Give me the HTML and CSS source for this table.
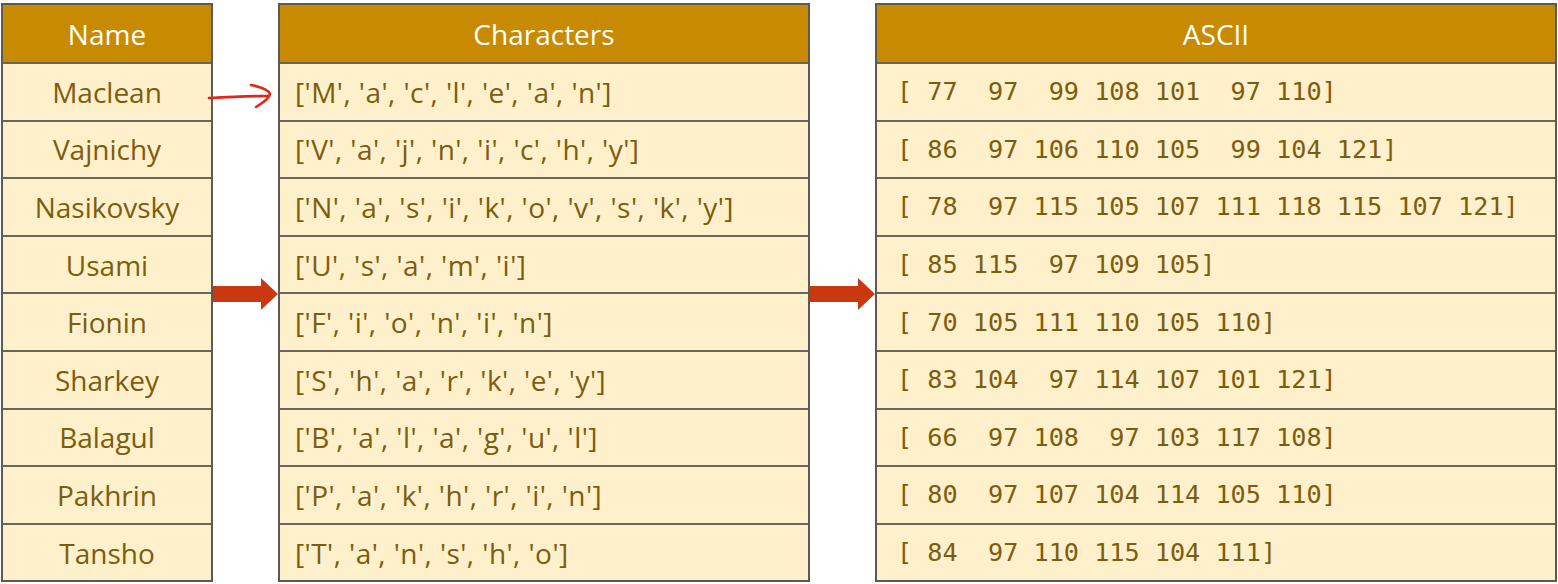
FILE: index.html
```html
<!DOCTYPE html>
<html lang="en">
<head>
    <meta charset="UTF-8">
    <title>Names to ASCII</title>
    <link rel="stylesheet" href="styles.css">
</head>
<body>
    <div class="board">
        <div class="table names">
            <div class="head">Name</div>
            <div class="cell">Maclean</div>
            <div class="cell">Vajnichy</div>
            <div class="cell">Nasikovsky</div>
            <div class="cell">Usami</div>
            <div class="cell">Fionin</div>
            <div class="cell">Sharkey</div>
            <div class="cell">Balagul</div>
            <div class="cell">Pakhrin</div>
            <div class="cell">Tansho</div>
        </div>

        <div class="gap">
            <svg class="scribble" width="70" height="30" viewBox="0 0 70 30">
                <path d="M2 17 C 20 16, 45 15, 62 15" fill="none" stroke="#e3241b" stroke-width="2.6" stroke-linecap="round"/>
                <path d="M44 4 C 54 6, 62 9, 63 13 C 62 18, 54 23, 49 26" fill="none" stroke="#e3241b" stroke-width="2.6" stroke-linecap="round"/>
            </svg>
            <svg class="arrow" width="66" height="34" viewBox="0 0 66 34">
                <polygon points="0,9 48,9 48,1 65,17 48,33 48,25 0,25" fill="#c9380f"/>
            </svg>
        </div>

        <div class="table chars">
            <div class="head">Characters</div>
            <div class="cell">['M', 'a', 'c', 'l', 'e', 'a', 'n']</div>
            <div class="cell">['V', 'a', 'j', 'n', 'i', 'c', 'h', 'y']</div>
            <div class="cell">['N', 'a', 's', 'i', 'k', 'o', 'v', 's', 'k', 'y']</div>
            <div class="cell">['U', 's', 'a', 'm', 'i']</div>
            <div class="cell">['F', 'i', 'o', 'n', 'i', 'n']</div>
            <div class="cell">['S', 'h', 'a', 'r', 'k', 'e', 'y']</div>
            <div class="cell">['B', 'a', 'l', 'a', 'g', 'u', 'l']</div>
            <div class="cell">['P', 'a', 'k', 'h', 'r', 'i', 'n']</div>
            <div class="cell">['T', 'a', 'n', 's', 'h', 'o']</div>
        </div>

        <div class="gap">
            <svg class="arrow" width="66" height="34" viewBox="0 0 66 34">
                <polygon points="0,9 48,9 48,1 65,17 48,33 48,25 0,25" fill="#c9380f"/>
            </svg>
        </div>

        <div class="table ascii">
            <div class="head">ASCII</div>
            <div class="cell">[ 77  97  99 108 101  97 110]</div>
            <div class="cell">[ 86  97 106 110 105  99 104 121]</div>
            <div class="cell">[ 78  97 115 105 107 111 118 115 107 121]</div>
            <div class="cell">[ 85 115  97 109 105]</div>
            <div class="cell">[ 70 105 111 110 105 110]</div>
            <div class="cell">[ 83 104  97 114 107 101 121]</div>
            <div class="cell">[ 66  97 108  97 103 117 108]</div>
            <div class="cell">[ 80  97 107 104 114 105 110]</div>
            <div class="cell">[ 84  97 110 115 104 111]</div>
        </div>
    </div>
</body>
</html>
```

FILE: styles.css
```css
body {
    margin: 0;
    background-color: white;
    font-family: "Open Sans", "Noto Sans", sans-serif;
}
.board {
    display: flex;
    padding: 3px 0 0 1px;
}
.table {
    border: 2px solid #5c5a55;
    background-color: #fef0cb;
    color: #7d5c0e;
    box-sizing: border-box;
}
.names {
    width: 212px;
}
.chars {
    width: 532px;
}
.ascii {
    width: 682px;
}
.head {
    height: 57px;
    background-color: #c78a00;
    color: white;
    font-size: 28px;
    display: flex;
    align-items: center;
    justify-content: center;
}
.cell {
    height: 55.6px;
    border-top: 2px solid #6b655a;
    font-size: 28px;
    display: flex;
    align-items: center;
    white-space: pre;
}
.names .cell {
    justify-content: center;
}
.chars .cell {
    padding-left: 15px;
    letter-spacing: 0.45px;
}
.ascii .cell {
    padding-left: 20px;
    font-family: "DejaVu Sans Mono", "Liberation Mono", monospace;
    font-size: 25.2px;
}
.gap {
    width: 65px;
    position: relative;
}
.arrow {
    position: absolute;
    left: 0;
    top: 274px;
}
.scribble {
    position: absolute;
    left: -6px;
    top: 78px;
}
```
